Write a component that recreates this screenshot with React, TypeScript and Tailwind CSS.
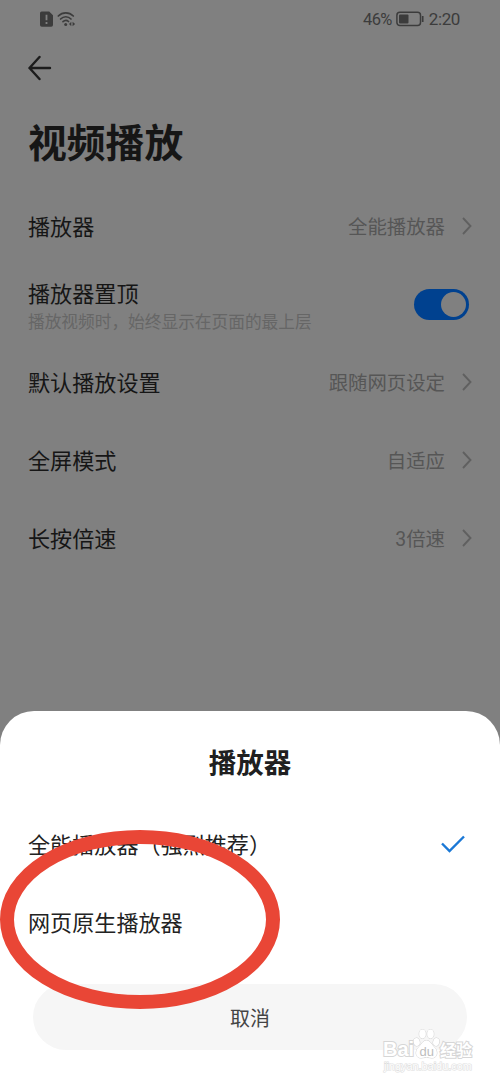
import { useState } from "react";

interface Setting {
  label: string;
  value?: string;
  hint?: string;
}

const settings: readonly Setting[] = [
  { label: "播放器", value: "全能播放器" },
  { label: "播放器置顶", hint: "播放视频时，始终显示在页面的最上层" },
  { label: "默认播放设置", value: "跟随网页设定" },
  { label: "全屏模式", value: "自适应" },
  { label: "长按倍速", value: "3倍速" },
];

const players = ["全能播放器（强烈推荐）", "网页原生播放器"] as const;

function StatusBar() {
  return (
    <div className="flex h-[38px] items-center justify-between px-10 text-[#3c3c3c]">
      <div className="flex items-center gap-1">
        <svg viewBox="0 0 13 16" className="h-4 w-[13px]" aria-hidden="true">
          <path
            d="M2 .5h7.2L13 4.2V14a1.8 1.8 0 0 1-1.8 1.8H1.8A1.8 1.8 0 0 1 0 14V2.3A1.8 1.8 0 0 1 2 .5Z"
            fill="currentColor"
          />
          <path d="M6.5 3.8v5.4M6.5 11v2" stroke="#808080" strokeWidth="1.8" />
        </svg>
        <svg viewBox="0 0 19 16" fill="none" className="h-4 w-[19px]" aria-hidden="true">
          <path
            d="M1.3 5C5.5.7 12 .7 16.3 5M3.6 8c3-3 7.4-3 10.4 0M6 10.7c1.7-1.6 4-1.6 5.5-.2"
            stroke="currentColor"
            strokeWidth="1.7"
            strokeLinecap="round"
          />
          <circle cx="8.7" cy="13.6" r="1.5" fill="currentColor" />
          <path d="M14.3 10.8v4.4L12 13Zm1.3 0v4.4l2.5-2.2Z" fill="currentColor" />
        </svg>
      </div>
      <div className="flex items-center">
        <span className="pt-0.5 text-[16.5px] tracking-[-0.6px]">46%</span>
        <svg viewBox="0 0 28 16" fill="none" className="mr-[5px] ml-[4px] h-4 w-7" aria-hidden="true">
          <rect x=".9" y="1.2" width="23.6" height="13.4" rx="3" stroke="currentColor" strokeWidth="1.5" />
          <rect x="3" y="3.5" width="9.5" height="9" rx="1" fill="currentColor" />
          <path d="M26.7 5v6" stroke="currentColor" strokeWidth="1.7" />
        </svg>
        <span className="pt-0.5 text-[17px] tracking-[-0.4px]">2:20</span>
      </div>
    </div>
  );
}

function Chevron() {
  return (
    <svg viewBox="0 0 12 20" fill="none" className="mb-px ml-[16px] h-5 w-3" aria-hidden="true">
      <path d="m2 2 7.5 8L2 18" stroke="#606060" strokeWidth="1.9" />
    </svg>
  );
}

function SettingRow({ label, value, hint }: Setting) {
  return (
    <div className="flex h-[78px] items-center justify-between">
      <div className={hint ? "flex flex-col pt-[3px]" : "flex flex-col"}>
        <span className="text-[22.1px] leading-8 text-[#161616]">{label}</span>
        {hint && <span className="text-[16.7px] leading-[25px] text-[#666]">{hint}</span>}
      </div>
      {value ? (
        <div className="-mr-px flex items-center text-[19.4px] text-[#565656]">
          <span className="pt-[2px]">{value}</span>
          <Chevron />
        </div>
      ) : (
        <div className="mr-[3px] mb-px flex h-[31px] w-[55px] items-center justify-end rounded-full bg-[#00418f] pr-[3px]">
          <span className="size-[25px] rounded-full bg-[#808080]" />
        </div>
      )}
    </div>
  );
}

function Watermark() {
  return (
    <div className="absolute top-[1029px] left-[383px] flex w-[92px] flex-col">
      <div className="flex h-[30px] items-end font-['Liberation_Sans','Noto_Sans_CJK_SC',sans-serif] font-bold text-white [-webkit-text-stroke:2px_#d6d6d6] [paint-order:stroke_fill]">
        <span className="w-[30px] text-[20px] leading-[19px]">Bai</span>
        <svg viewBox="0 0 27 31" className="h-[31px] w-[27px]" aria-hidden="true">
          <g fill="#fff" stroke="#d2d2d2" strokeWidth="1">
            <ellipse cx="3.7" cy="14" rx="3" ry="4" transform="rotate(-15 3.7 14)" />
            <ellipse cx="9.5" cy="6" rx="3.3" ry="4.4" />
            <ellipse cx="17.5" cy="6" rx="3.3" ry="4.4" />
            <ellipse cx="23.2" cy="14" rx="3" ry="4" transform="rotate(15 23.2 14)" />
            <path d="M13.5 12.5c4 0 5 4 8 7 3.5 3 3.5 10.5-2.5 10.5-2 0-3.5-.7-5.5-.7s-3.5.7-5.5.7c-6 0-6-7.5-2.5-10.5 3-3 4-7 8-7Z" />
          </g>
          <text
            x="6.5"
            y="27.5"
            fontSize="13"
            fontWeight="400"
            fill="#bdbdbd"
            stroke="none"
            className="font-['Liberation_Sans',sans-serif] [-webkit-text-stroke:0px]"
          >
            du
          </text>
        </svg>
        <span className="text-[16px] leading-[16px]">经验</span>
      </div>
      <span className="pl-px font-['Liberation_Sans',sans-serif] text-[10.9px] leading-[15px] whitespace-nowrap text-white [-webkit-text-stroke:1.2px_#dedede] [paint-order:stroke_fill]">
        jingyan.baidu.com
      </span>
    </div>
  );
}

export default function App() {
  const [selected, setSelected] = useState(0);

  return (
    <div className="relative flex h-[1084px] w-[500px] flex-col overflow-hidden bg-[#808080] font-[Roboto,'Noto_Sans_CJK_SC',sans-serif]">
      <StatusBar />

      <main className="flex flex-1 flex-col px-7">
        <button type="button" aria-label="返回" className="mt-[17px] h-[26px] w-6">
          <svg viewBox="0 0 24 26" fill="none" className="h-[26px] w-6" aria-hidden="true">
            <path
              d="M11.5 2 1.5 13l10 11M1.5 13h20.5"
              stroke="#1c1c1c"
              strokeWidth="2.4"
              strokeLinecap="round"
              strokeLinejoin="round"
            />
          </svg>
        </button>
        <h1 className="mt-9 mb-[17px] text-[38.8px] leading-[54px] font-bold text-[#161616]">视频播放</h1>
        {settings.map((setting) => (
          <SettingRow key={setting.label} {...setting} />
        ))}
      </main>

      <section className="flex h-[373px] flex-col rounded-t-[34px] bg-white pt-[31px]">
        <h2 className="text-center text-[27.5px] leading-[44px] font-bold text-[#202020]">播放器</h2>
        <div className="mt-[19px] flex flex-col">
          {players.map((player, i) => (
            <button
              key={player}
              type="button"
              onClick={() => setSelected(i)}
              className="flex h-[78px] items-center justify-between pr-[34px] pl-7 text-[22.1px] text-[#222]"
            >
              <span className="pt-[3px]">{player}</span>
              {selected === i && (
                <svg viewBox="0 0 26 20" fill="none" className="h-5 w-[26px]" aria-hidden="true">
                  <path d="m2 9.5 7.5 7.5L24 2.5" stroke="#1a78d6" strokeWidth="2.4" />
                </svg>
              )}
            </button>
          ))}
        </div>
        <button
          type="button"
          className="mx-[33px] mt-[23px] h-[66px] rounded-full bg-[#f6f6f6] pt-[3px] text-[20px] text-[#444]"
        >
          取消
        </button>
      </section>

      <svg
        viewBox="0 0 280 180"
        fill="none"
        className="pointer-events-none absolute top-[830px] left-0 h-[180px] w-[280px]"
        aria-hidden="true"
      >
        <ellipse cx="140" cy="89.5" rx="133" ry="82.5" stroke="#e94636" strokeWidth="14" />
      </svg>
      <Watermark />
    </div>
  );
}
